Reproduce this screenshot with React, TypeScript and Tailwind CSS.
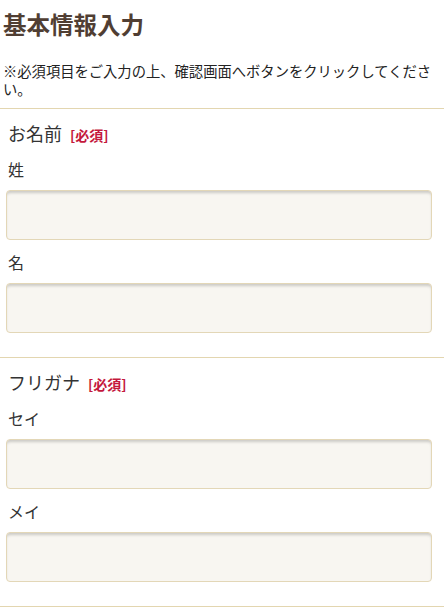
const font = { fontFamily: '"Noto Sans CJK JP", "Noto Sans", sans-serif' };

function Field({ label }: { label: string }) {
  return (
    <div>
      <label className="block pl-[8px] text-[16px] leading-[24px] text-[#333333]">{label}</label>
      <input
        type="text"
        className="mt-[9px] ml-[6px] block h-[50px] w-[426px] rounded-[4px] border border-[#e3d7b7] bg-[#f8f6f1] shadow-[inset_0_3px_3px_-1px_rgba(0,0,0,0.18)] outline-none"
      />
    </div>
  );
}

function Section({ title, fields }: { title: string; fields: string[] }) {
  return (
    <section className="border-t border-[#e3d6b0] pt-[11px] pb-[24px]">
      <h2 className="h-[26px] pl-[8px] text-[18px] leading-[26px] text-[#333333]">
        {title}
        <span className="ml-[8px] align-baseline text-[14px] font-bold leading-none text-[#c4183c]">[必須]</span>
      </h2>
      <div className="mt-[11px] flex flex-col gap-[10px]">
        {fields.map((f) => (
          <Field key={f} label={f} />
        ))}
      </div>
    </section>
  );
}

export default function App() {
  return (
    <div className="min-h-screen w-[444px] bg-white" style={font}>
      <h1 className="pt-[7px] pl-[3px] text-[23.5px] font-bold leading-[34px] text-[#503e33]">基本情報入力</h1>
      <p className="mt-[21px] pl-[3px] pr-[4px] text-[14.3px] leading-[18px] text-[#222222]">
        ※必須項目をご入力の上、確認画面へボタンをクリックしてください。
      </p>
      <div className="mt-[10px]">
        <Section title="お名前" fields={['姓', '名']} />
        <Section title="フリガナ" fields={['セイ', 'メイ']} />
        <div className="border-t border-[#e3d6b0]" />
      </div>
    </div>
  );
}
